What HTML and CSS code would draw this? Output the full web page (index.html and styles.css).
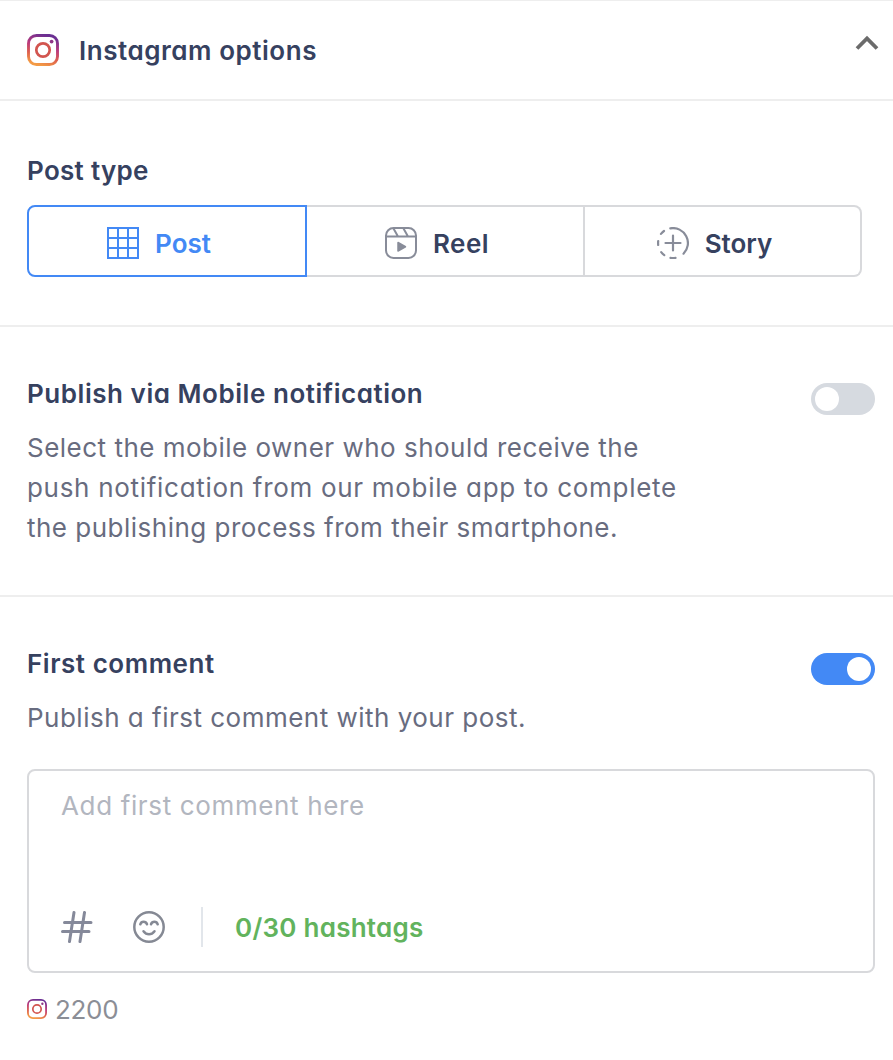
FILE: index.html
```html
<!DOCTYPE html>
<html lang="en">
<head>
  <meta charset="UTF-8">
  <meta name="viewport" content="width=device-width, initial-scale=1">
  <title>Instagram options</title>
  <link rel="stylesheet" href="styles.css">
</head>
<body>
  <svg class="defs" width="0" height="0" aria-hidden="true">
    <defs>
      <linearGradient id="ig" x1="0.35" y1="1" x2="0.65" y2="0">
        <stop offset="0" stop-color="#f39a45"/>
        <stop offset="0.3" stop-color="#dd5f4e"/>
        <stop offset="0.6" stop-color="#bb3a7c"/>
        <stop offset="1" stop-color="#6a2f92"/>
      </linearGradient>
      <symbol id="instagram" viewBox="0 0 32 32">
        <rect x="1.5" y="1.5" width="29" height="29" rx="8" fill="none" stroke="url(#ig)" stroke-width="2.9"/>
        <circle cx="16" cy="16" r="6.7" fill="none" stroke="#d2554f" stroke-width="2.7"/>
        <circle cx="24.6" cy="7.6" r="1.9" fill="#8f3585"/>
      </symbol>
    </defs>
  </svg>

  <main class="panel">
    <header class="panel-header">
      <svg class="logo" width="32" height="32"><use href="#instagram"/></svg>
      <h1 class="title title-main">Instagram options</h1>
      <svg class="chevron" width="24" height="16" viewBox="0 0 24 16">
        <path d="M2 13.5 12 3.5l10 10" fill="none" stroke="#6b6b6b" stroke-width="3.8"/>
      </svg>
    </header>

    <section class="section post-type">
      <h2 class="title title-type">Post type</h2>
      <div class="segments">
        <button class="segment active">
          <svg width="32" height="32" viewBox="0 0 32 32" fill="none" stroke="currentColor" stroke-width="2">
            <path d="M1 1h30v30H1zM11 1v30M21 1v30M1 11h30M1 21h30"/>
          </svg>
          <span>Post</span>
        </button>
        <button class="segment">
          <svg width="32" height="32" viewBox="0 0 32 32" fill="none" stroke="#888c99" stroke-width="2">
            <rect x="1" y="1" width="30" height="30" rx="7.5"/>
            <path d="M1 9.5h30M8.500 1.500l4.500 8M18.500 1.500l4.500 8"/>
            <path d="M13 15.500v8.500l7.500-4.250z" fill="#888c99" stroke-width="1.5" stroke-linejoin="round"/>
          </svg>
          <span class="label-reel">Reel</span>
        </button>
        <button class="segment">
          <svg width="32" height="32" viewBox="0 0 32 32" fill="none" stroke="#888c99" stroke-width="2.2" stroke-linecap="round">
            <path d="M13.300 1.300A15 15 0 0 1 26.500 26.700"/>
            <path d="M13.500 30.800A15 15 0 0 0 18.500 30.800M7.300 28.200A15 15 0 0 1 4.200 25.200M1.200 18A15 15 0 0 1 1.200 14M4 6.900A15 15 0 0 1 7 4"/>
            <path d="M16 8.500v15M8.500 16h15"/>
          </svg>
          <span>Story</span>
        </button>
      </div>
    </section>

    <section class="section row-section">
      <div class="copy">
        <h2 class="title">Publish via Mobile notification</h2>
        <p class="description">
          <span class="line">Select the mobile owner who should receive the</span>
          <span class="line line-wide">push notification from our mobile app to complete</span>
          <span class="line">the publishing process from their smartphone.</span>
        </p>
      </div>
      <span class="toggle" role="switch" aria-checked="false"></span>
    </section>

    <section class="section comment-section">
      <div class="comment-head">
        <div class="copy">
          <h2 class="title">First comment</h2>
          <p class="description"><span class="line">Publish a first comment with your post.</span></p>
        </div>
        <span class="toggle on" role="switch" aria-checked="true"></span>
      </div>
      <div class="comment-box">
        <div class="placeholder">Add first comment here</div>
        <div class="toolbar">
          <svg class="hash" width="32" height="32" viewBox="0 0 32 32" fill="none" stroke="#85899a" stroke-width="3" stroke-linecap="round">
            <path d="M13 1.500 8.500 30.500M23.500 1.500 19 30.500M3.500 11.500h26.500M1.500 20.500h26.500"/>
          </svg>
          <svg class="smile" width="32" height="32" viewBox="0 0 32 32" fill="none" stroke="#858994" stroke-width="2.5" stroke-linecap="round">
            <circle cx="16" cy="16" r="14.700"/>
            <path d="M7.300 13.300c1-3.300 5.500-3.300 6.700 0M18 13.300c1.200-3.300 5.700-3.300 6.700 0M10.500 20.300c3 4 8 4 11 0"/>
          </svg>
          <span class="divider"></span>
          <span class="hashtags">0/30 hashtags</span>
        </div>
      </div>
      <div class="counter">
        <svg width="20" height="20"><use href="#instagram"/></svg>
        <span>2200</span>
      </div>
    </section>
  </main>
</body>
</html>
```

FILE: styles.css
```css
:root {
  --ink: #36415f;
  --muted: #686c7f;
  --blue: #4389f5;
  --line: #eeeeee;
  --border: #d8d9dc;
}
* { box-sizing: border-box; }
body {
  margin: 0;
  background: #fff;
  font-family: Inter, Lato, sans-serif;
  font-feature-settings: "cv11";
  font-size: 26px;
  color: var(--ink);
}
svg { display: block; flex: none; }
.defs { position: absolute; }
.panel {
  height: 1060px;
  border-top: 1px solid var(--line);
  overflow: hidden;
}
.panel-header {
  display: flex;
  align-items: center;
  height: 100px;
  padding: 0 14px 0 27px;
  border-bottom: 2px solid var(--line);
}
.title {
  margin: 0;
  font-size: 26px;
  font-weight: 600;
  line-height: 40px;
  letter-spacing: 0.54px;
  white-space: nowrap;
}
.title-main { margin: 2px 0 0 20px; }
.title-type { letter-spacing: 0.3px; }
.chevron { margin: 0 0 15px auto; }
.section {
  padding: 0 18px 0 27px;
  border-bottom: 2px solid var(--line);
}
.post-type {
  height: 226px;
  padding-top: 50px;
}
.segments {
  display: grid;
  grid-template-columns: 280px 278px 277px;
  height: 72px;
  margin-top: 14px;
}
.segment {
  display: flex;
  align-items: center;
  justify-content: center;
  gap: 16px;
  padding: 4px 16px 0 0;
  border: 2px solid var(--border);
  border-left: 0;
  background: #fff;
  color: var(--ink);
  font: inherit;
  font-weight: 600;
}
.segment.active {
  border: 2px solid var(--blue);
  border-radius: 8px 0 0 8px;
  color: var(--blue);
}
.segment:last-child { border-radius: 0 8px 8px 0; }
.label-reel { letter-spacing: 0.4px; }
.row-section {
  display: flex;
  justify-content: space-between;
  height: 270px;
  padding-top: 47px;
}
.description {
  margin: 14px 0 0;
  color: var(--muted);
  line-height: 40px;
}
.line {
  display: block;
  letter-spacing: 0.49px;
  white-space: nowrap;
}
.line-wide { letter-spacing: 0.7px; }
.toggle {
  flex: none;
  width: 64px;
  height: 32px;
  margin-top: 9px;
  padding: 4px;
  border-radius: 16px;
  background: #d6dae0;
}
.toggle::before {
  content: "";
  display: block;
  width: 24px;
  height: 24px;
  border-radius: 50%;
  background: #fff;
}
.toggle.on { background: var(--blue); }
.toggle.on::before { margin-left: auto; }
.comment-section {
  padding-top: 47px;
  border-bottom: 0;
}
.comment-head {
  display: flex;
  justify-content: space-between;
}
.comment-box {
  display: flex;
  flex-direction: column;
  justify-content: space-between;
  height: 204px;
  margin-top: 31px;
  padding: 15px 32px 24px;
  border: 2px solid var(--border);
  border-radius: 8px;
}
.placeholder {
  line-height: 40px;
  letter-spacing: 0.64px;
  color: #b2b6bf;
}
.toolbar {
  display: flex;
  align-items: center;
  height: 40px;
}
.smile { margin-left: 40px; }
.divider {
  width: 2px;
  height: 40px;
  margin: 0 32px 0 36px;
  background: #e2e6eb;
}
.hashtags {
  font-weight: 600;
  letter-spacing: 0.25px;
  color: #62b35d;
}
.counter {
  display: flex;
  align-items: center;
  gap: 8px;
  height: 40px;
  margin-top: 16px;
  letter-spacing: -0.3px;
  color: #8b8e96;
}
```
